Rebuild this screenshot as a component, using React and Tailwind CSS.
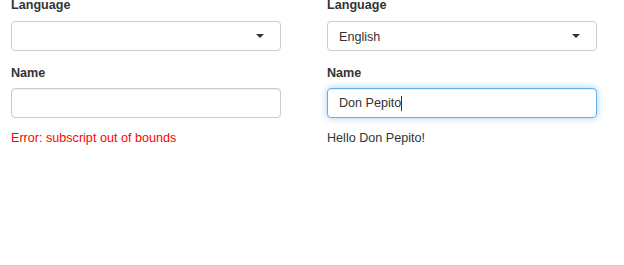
import React from 'react';

const Caret = () => (
    <svg width="8" height="4" viewBox="0 0 8 4" className="shrink-0">
        <path d="M0 0 L8 0 L4 4 Z" fill="#333" />
    </svg>
);

const Label = ({ children, className = '' }) => (
    <div className={`text-[12.6px] leading-[18px] font-bold text-[#333] ${className}`}>{children}</div>
);

const SelectBox = ({ value }) => (
    <div className="h-[30px] w-[270px] border border-[#ccc] rounded-[4px] bg-white flex items-center pl-[11px] pr-[16px]">
        <span className="flex-1 text-[12.6px] leading-[18px] text-[#333] pt-px">{value}</span>
        <Caret />
    </div>
);

const TextBox = ({ value, focused }) => (
    <div
        className={
            focused
                ? 'h-[30px] w-[270px] border border-[#66afe9] rounded-[4px] bg-white flex items-center pl-[11px] shadow-[inset_0_1px_1px_rgba(0,0,0,0.075),0_0_7px_rgba(102,175,233,0.6)]'
                : 'h-[30px] w-[270px] border border-[#ccc] rounded-[4px] bg-white flex items-center pl-[11px] shadow-[inset_0_1px_1px_rgba(0,0,0,0.075)]'
        }
    >
        <span className="text-[12.6px] leading-[18px] text-[#333]">{value}</span>
        {focused && <span className="w-px h-[15px] bg-[#333]" />}
    </div>
);

const Column = ({ language, name, focused, output, error }) => (
    <div className="w-[270px]">
        <Label className="mb-[7px]">Language</Label>
        <SelectBox value={language} />
        <Label className="mt-[13px] mb-[6px]">Name</Label>
        <TextBox value={name} focused={focused} />
        <div className={`mt-[11px] text-[12.6px] leading-[18px] ${error ? 'text-[#ff0000]' : 'text-[#333]'}`}>
            {output}
        </div>
    </div>
);

export default function App() {
    return (
        <div
            className="w-[624px] h-[265px] bg-white overflow-hidden"
            style={{ fontFamily: '"Liberation Sans", Arial, sans-serif' }}
        >
            <div className="flex gap-[46px] pl-[11px] -mt-[4px]">
                <Column language="" name="" error output="Error: subscript out of bounds" />
                <Column language="English" name="Don Pepito" focused output="Hello Don Pepito!" />
            </div>
        </div>
    );
}
